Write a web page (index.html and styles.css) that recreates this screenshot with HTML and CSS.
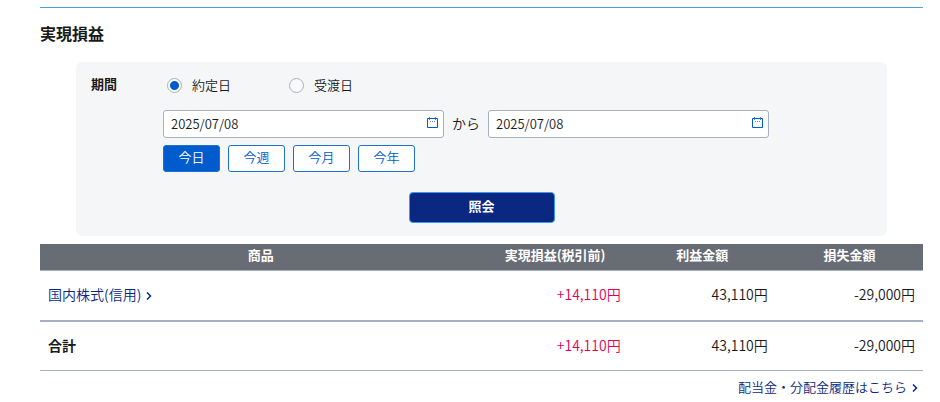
FILE: index.html
```html
<!DOCTYPE html>
<html lang="ja">
<head>
    <meta charset="UTF-8">
    <meta name="viewport" content="width=device-width, initial-scale=1.0">
    <title>実現損益</title>
    <link rel="stylesheet" href="styles.css">
</head>
<body>

    <main class="container">
        <h1>実現損益</h1>

        <form class="search-box">
            <div class="search-row">
                <div class="search-label" id="period-label">期間</div>
                <div class="search-fields">
                    <div class="radio-group" role="radiogroup" aria-labelledby="period-label">
                        <label><input type="radio" name="date-type" value="trade" checked>約定日</label>
                        <label><input type="radio" name="date-type" value="delivery">受渡日</label>
                    </div>

                    <div class="date-range">
                        <div class="date-box">
                            <input type="text" id="date-from" value="2025/07/08" aria-label="開始日">
                            <svg class="calendar" viewBox="0 0 12 12" aria-hidden="true">
                                <path d="M.5 1.5h10v9H.5z" />
                                <path class="dots" d="M2 .5h1 M8 .5h1 M2 2.5h1 M8 2.5h1 M3 4.5h1 M5 4.5h1 M7 4.5h1" />
                            </svg>
                        </div>
                        <span>から</span>
                        <div class="date-box">
                            <input type="text" id="date-to" value="2025/07/08" aria-label="終了日">
                            <svg class="calendar" viewBox="0 0 12 12" aria-hidden="true">
                                <path d="M.5 1.5h10v9H.5z" />
                                <path class="dots" d="M2 .5h1 M8 .5h1 M2 2.5h1 M8 2.5h1 M3 4.5h1 M5 4.5h1 M7 4.5h1" />
                            </svg>
                        </div>
                    </div>

                    <div class="quick-buttons">
                        <button type="button" class="active">今日</button>
                        <button type="button">今週</button>
                        <button type="button">今月</button>
                        <button type="button">今年</button>
                    </div>
                </div>
            </div>

            <button type="button" class="submit-button">照会</button>
        </form>

        <table class="result">
            <thead>
                <tr>
                    <th class="product">商品</th>
                    <th>実現損益(税引前)</th>
                    <th>利益金額</th>
                    <th>損失金額</th>
                </tr>
            </thead>
            <tbody>
                <tr>
                    <td class="name"><a href="#">国内株式(信用)<svg class="arrow" viewBox="0 0 6 8" aria-hidden="true"><path d="M1 .5L4.500 4L1 7.500" /></svg></a></td>
                    <td class="plus">+14,110円</td>
                    <td>43,110円</td>
                    <td>-29,000円</td>
                </tr>
                <tr class="total">
                    <th class="name" scope="row">合計</th>
                    <td class="plus">+14,110円</td>
                    <td>43,110円</td>
                    <td>-29,000円</td>
                </tr>
            </tbody>
        </table>

        <p class="history"><a href="#">配当金・分配金履歴はこちら<svg class="arrow" viewBox="0 0 6 8" aria-hidden="true"><path d="M1 .5L4.500 4L1 7.500" /></svg></a></p>
    </main>

</body>
</html>
```

FILE: styles.css
```css
* {
    box-sizing: border-box;
}

body {
    margin: 0;
    background-color: #ffffff;
    color: #1a1a1a;
    font-family: "Noto Sans CJK JP", sans-serif;
    font-size: 13px;
    font-weight: 350;
    line-height: 20px;
}

a {
    color: #0a2882;
    text-decoration: none;
}

a:hover {
    text-decoration: underline;
}

button,
input {
    font-family: inherit;
    font-size: 13px;
    font-weight: inherit;
    color: inherit;
}

button {
    cursor: pointer;
}

.container {
    margin: 7px 17px 0 40px;
    border-top: 1px solid #4aa0dc;
}

h1 {
    margin: 13px 0 17px;
    font-size: 16px;
    line-height: 24px;
}

.search-box {
    margin: 0 36px 8px;
    padding: 12px 15px 13px;
    border-radius: 6px;
    background-color: #f4f6f8;
}

.search-row {
    display: flex;
}

.search-label {
    width: 72px;
    font-weight: bold;
}

.radio-group {
    display: flex;
    gap: 58px;
    padding-left: 4px;
    margin-top: 1px;
}

.radio-group label {
    display: flex;
    align-items: center;
}

.radio-group input {
    appearance: none;
    width: 15px;
    height: 15px;
    margin: 0 10px 0 0;
    border: 1px solid #a5b0c5;
    border-radius: 50%;
    background-color: #f8f9fa;
}

.radio-group input:checked {
    background: radial-gradient(circle, #005bcd 4px, #ffffff 5px);
}

.date-range {
    display: flex;
    align-items: center;
    gap: 8px;
    margin-top: 15px;
}

.date-range span {
    padding-bottom: 2px;
    font-size: 14px;
}

.date-box {
    position: relative;
    width: 281px;
}

.date-box input {
    display: block;
    width: 100%;
    height: 28px;
    padding: 0 24px 2px 7px;
    border: 1px solid #a5b0c5;
    border-radius: 3px;
    background-color: #ffffff;
}

.calendar {
    position: absolute;
    top: 7px;
    right: 5px;
    width: 12px;
    height: 12px;
    fill: none;
    stroke: #005bcd;
}

.calendar .dots {
    opacity: 0.7;
}

.quick-buttons {
    display: flex;
    gap: 8px;
    margin-top: 7px;
}

.quick-buttons button {
    width: 57px;
    height: 27px;
    padding: 0 0 4px;
    border: 1px solid #1e70d0;
    border-radius: 3px;
    background-color: #ffffff;
    color: #005bcd;
}

.quick-buttons .active {
    background-color: #005bcd;
    color: #ffffff;
}

.submit-button {
    display: block;
    width: 146px;
    height: 31px;
    margin: 20px auto 0;
    padding: 0 0 4px;
    border: 1px solid #3c9bf0;
    border-radius: 4px;
    background-color: #0a2882;
    color: #ffffff;
    font-weight: bold;
}

.result {
    width: 100%;
    border-collapse: collapse;
    table-layout: fixed;
}

.result thead th {
    height: 26px;
    padding: 0 0 3px;
    background-color: #686c75;
    color: #ffffff;
}

.result thead .product {
    width: 50%;
}

.result tbody tr {
    border-top: 1px solid #a5b0c5;
    border-bottom: 1px solid #a5b0c5;
}

.result tbody .total {
    border-top: 2px solid #a5b0c5;
}

.result td,
.result tbody th {
    height: 51px;
    padding: 0 8px 2px;
    font-size: 14px;
    text-align: right;
}

.result .total td,
.result .total th {
    height: 49px;
}

.result tbody .name {
    text-align: left;
}

.result .plus {
    color: #e60050;
}

.arrow {
    width: 6px;
    height: 8px;
    margin-left: 5px;
    fill: none;
    stroke: #0a2882;
    stroke-width: 1.5;
}

.history {
    margin: 6px 5px 0;
    text-align: right;
}
```
